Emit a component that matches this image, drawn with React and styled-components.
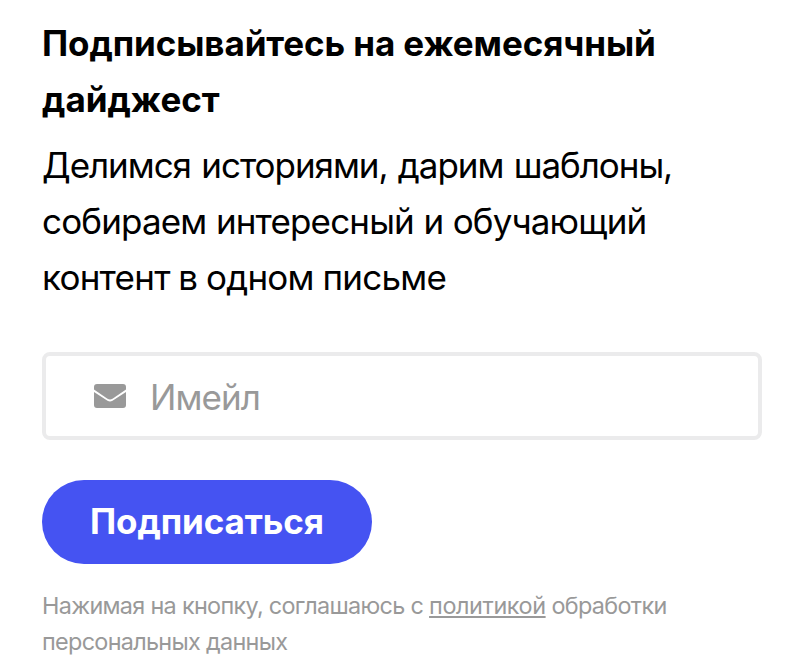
import React from "react";
import styled, { createGlobalStyle } from "styled-components";

const GlobalStyle = createGlobalStyle`
  *, *::before, *::after { box-sizing: border-box; }
  body { margin: 0; background: #fff; color: #000; font-family: Inter, "Liberation Sans", sans-serif; }
`;

const Form = styled.form`
  display: flex;
  flex-direction: column;
  align-items: flex-start;
  width: 804px;
  height: 672px;
  padding: 15px 42px 0;
  overflow: hidden;
`;

const Title = styled.h2`
  margin: 0;
  font-size: 35px;
  font-weight: 700;
  line-height: 56px;
`;

const Lead = styled.p`
  margin: 10px 0 0;
  font-size: 35px;
  line-height: 56px;
`;

const Line = styled.span`
  display: block;
  width: max-content;
  white-space: nowrap;
  letter-spacing: ${(p) => p.$tracking || 0}px;
  word-spacing: ${(p) => p.$gap || 0}px;
`;

const Field = styled.label`
  display: flex;
  align-items: center;
  gap: 24px;
  width: 720px;
  height: 88px;
  margin-top: 47px;
  padding: 0 48px;
  border: 4px solid #ebebec;
  border-radius: 8px;
`;

const MailIcon = styled.svg`
  flex: none;
  width: 32px;
  height: 24px;
  fill: #999;
`;

const Input = styled.input`
  flex: 1;
  min-width: 0;
  padding: 2px 0 0;
  border: 0;
  outline: 0;
  background: none;
  font: 400 35px/56px Inter, sans-serif;
  letter-spacing: -0.9px;
  &::placeholder { color: #999; opacity: 1; }
`;

const Submit = styled.button`
  width: 330px;
  height: 84px;
  margin-top: 40px;
  padding: 0 0 2px;
  border: 0;
  border-radius: 42px;
  background: #4553f2;
  color: #fff;
  font: 700 35px/56px Inter, sans-serif;
  letter-spacing: -0.1px;
`;

const Legal = styled.p`
  margin: 24px 0 0;
  color: #999;
  font-size: 23.4px;
  line-height: 36px;
`;

const PolicyLink = styled.a`
  color: inherit;
  letter-spacing: -0.4px;
  text-decoration: underline;
  text-decoration-thickness: 2px;
  text-underline-offset: 2px;
  text-decoration-skip-ink: none;
`;

export default function App() {
  return (
    <Form>
      <GlobalStyle />
      <Title>
        <Line $tracking={-0.1}>Подписывайтесь на ежемесячный</Line>
        <Line $tracking={0}>дайджест</Line>
      </Title>
      <Lead>
        <Line $tracking={-1.04} $gap={1.5}>Делимся историями, дарим шаблоны,</Line>
        <Line $tracking={-0.85} $gap={0.5}>собираем интересный и обучающий</Line>
        <Line $tracking={-0.75} $gap={-0.5}>контент в одном письме</Line>
      </Lead>
      <Field>
        <MailIcon viewBox="0 0 32 24">
          <path d="M3 0H29Q32 0 32 3V5.5L18.5 14.8Q16 16.3 13.5 14.8L0 5.5V3Q0 0 3 0Z" />
          <path d="M0 8L13.5 16.7Q16 18.2 18.5 16.7L32 8V21Q32 24 29 24H3Q0 24 0 21Z" />
        </MailIcon>
        <Input type="email" placeholder="Имейл" />
      </Field>
      <Submit type="button">Подписаться</Submit>
      <Legal>
        <Line $tracking={-0.69}>
          Нажимая на кнопку, соглашаюсь с <PolicyLink href="#">политикой</PolicyLink> обработки
        </Line>
        <Line $tracking={-0.69}>персональных данных</Line>
      </Legal>
    </Form>
  );
}
